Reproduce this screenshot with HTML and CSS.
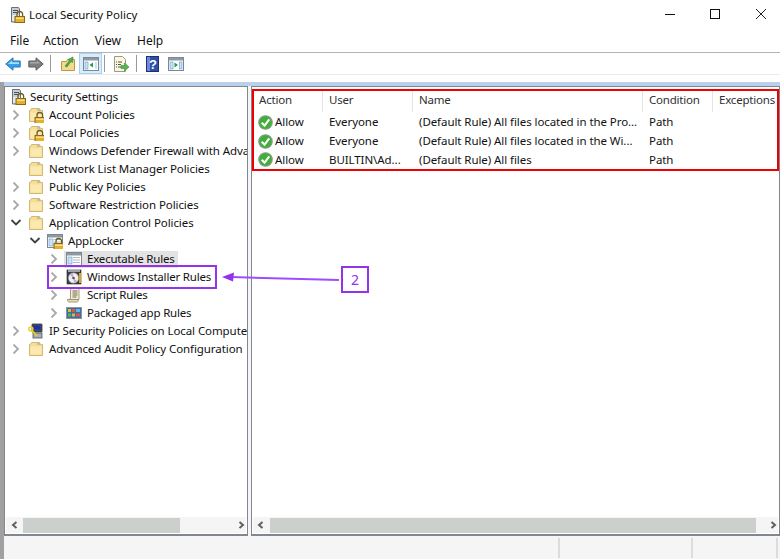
FILE: index.html
```html
<!DOCTYPE html>
<html lang="en">
<head>
<meta charset="utf-8">
<title>Local Security Policy</title>
<link rel="stylesheet" href="styles.css">
</head>
<body>
<svg class="defs" width="0" height="0" aria-hidden="true">
  <defs>
    <symbol id="lock" viewBox="0 0 16 16">
      <path d="M8 9.500V7.300a2.800 2.800 0 0 1 5.600 0v2.200" fill="none" stroke="#6e5a20" stroke-width="1.300"/>
      <rect x="6" y="9.500" width="9.500" height="6" fill="#e5b02c" stroke="#8a6a18"/>
      <rect x="7" y="10.500" width="7.500" height="1.500" fill="#f8e08a"/>
    </symbol>
    <symbol id="server" viewBox="0 0 16 16">
      <path d="M2.500.5h7l1 1.500v13h-8z" fill="#c9ced3" stroke="#66707a"/>
      <rect x="4" y="3" width="5" height="1" fill="#44505c"/>
      <rect x="4" y="5" width="5" height="1" fill="#44505c"/>
      <rect x="3" y="8" width="7" height="6" fill="#e8ebee"/>
      <use href="#lock"/>
    </symbol>
    <symbol id="folder" viewBox="0 0 16 16">
      <path d="M1.500 3.500h1l1-2h8l1 2h2v11h-13z" fill="#f8dd92" stroke="#d2b873"/>
      <path d="M2.500 5.500h11v8h-11z" fill="#fbe9b0"/>
      <rect x="9" y="2.500" width="3" height="1" fill="#7fa8d8"/>
    </symbol>
    <symbol id="folderlock" viewBox="0 0 16 16">
      <use href="#folder"/>
      <use href="#lock" x="1" y="1"/>
    </symbol>
    <symbol id="window" viewBox="0 0 16 16">
      <rect x="0.500" y="1.500" width="15" height="13" fill="#fff" stroke="#7d8890"/>
      <rect x="1" y="2" width="14" height="2.500" fill="#8d99a3"/>
      <rect x="2" y="6" width="4" height="7" fill="#cfe3f6" stroke="#6a9cc8" stroke-width=".6"/>
      <rect x="7" y="6" width="7" height="1" fill="#b5bcc2"/>
      <rect x="7" y="8.500" width="7" height="1" fill="#b5bcc2"/>
      <rect x="7" y="11" width="7" height="1" fill="#b5bcc2"/>
    </symbol>
    <symbol id="windowlock" viewBox="0 0 16 16">
      <use href="#window"/>
      <use href="#lock" x="1" y="1"/>
    </symbol>
    <symbol id="disc" viewBox="0 0 16 16">
      <rect x="1" y="1" width="14" height="14" fill="#3a3f46" stroke="#22262b" stroke-width=".6"/>
      <rect x="2" y="1" width="12" height="2" fill="#9aa4ad"/>
      <rect x="13" y="4" width="2" height="10" fill="#e0a020"/>
      <circle cx="7.500" cy="9" r="5.200" fill="#eef0f0" stroke="#8a9096" stroke-width=".5"/>
      <path d="M7.500 9 4 6a5 5 0 0 1 3-2zM7.500 9l3.500 3a5 5 0 0 1-3 2z" fill="#c7a6d8"/>
      <circle cx="7.500" cy="9" r="1.300" fill="#50565c"/>
    </symbol>
    <symbol id="scroll" viewBox="0 0 16 16">
      <path d="M5.500 1h9l-1.500 1.500v10H3.500l1-1.500V3z" fill="#f6eecb" stroke="#8c8468" stroke-width=".8"/>
      <path d="M1.500 12.500h10.500c.5 1 .2 2-.5 2.500H3c-1 0-1.700-1.500-1.500-2.500z" fill="#e9dfb2" stroke="#8c8468" stroke-width=".8"/>
      <path d="M6.500 4h5M6.500 6h5M6.500 8h5M6.500 10h4" stroke="#55575a" stroke-width=".9"/>
    </symbol>
    <symbol id="packaged" viewBox="0 0 16 16">
      <rect x="0.500" y="2.500" width="15" height="11" fill="#3a6fa5" stroke="#8b949c"/>
      <rect x="2" y="4" width="3" height="3" fill="#e8b52f"/>
      <rect x="6" y="4" width="3" height="3" fill="#e05a3a"/>
      <rect x="10" y="4" width="4" height="3" fill="#5cb8e8"/>
      <rect x="2" y="8.500" width="3" height="3" fill="#62b04a"/>
      <rect x="6" y="8.500" width="3" height="3" fill="#e8b52f"/>
      <rect x="10" y="8.500" width="4" height="3" fill="#d9534f"/>
    </symbol>
    <symbol id="ipsec" viewBox="0 0 16 16">
      <rect x="4" y="1" width="10" height="8" rx=".5" fill="#444c58" stroke="#30353c" stroke-width=".8"/>
      <rect x="5.500" y="2.500" width="7" height="4" fill="#1a2fb8"/>
      <rect x="5" y="10" width="9" height="5" fill="#a8aeb4" stroke="#50565c" stroke-width=".8"/>
      <circle cx="2.800" cy="6" r="2" fill="none" stroke="#f0d020" stroke-width="1.500"/>
      <path d="M4 7.500l5 5.500" stroke="#f0d020" stroke-width="1.600"/>
    </symbol>
    <symbol id="check" viewBox="0 0 16 16">
      <circle cx="8" cy="8" r="7.200" fill="#3fae3a" stroke="#8a9a8c" stroke-width="1.200"/>
      <path d="M4 8.200l3 3.200 5-6.800" fill="none" stroke="#fff" stroke-width="2.200"/>
    </symbol>
    <symbol id="chev" viewBox="0 0 8 10">
      <path d="M1.500 .5 6 5 1.500 9.500" fill="none" stroke="currentColor" stroke-width="1.800"/>
    </symbol>
    <symbol id="chevdown" viewBox="0 0 10 8">
      <path d="M.5 1 5 5.500 9.500 1" fill="none" stroke="currentColor" stroke-width="1.800"/>
    </symbol>
    <symbol id="sbleft" viewBox="0 0 8 8">
      <path d="M5.500 1 2 4l3.500 3" fill="none" stroke="#606060" stroke-width="2"/>
    </symbol>
    <symbol id="sbright" viewBox="0 0 8 8">
      <path d="M2.500 1 6 4 2.500 7" fill="none" stroke="#606060" stroke-width="2"/>
    </symbol>
  </defs>
</svg>

<div class="app">
  <header class="titlebar">
    <svg class="icon16"><use href="#server"/></svg>
    <span class="title">Local Security Policy</span>
    <div class="caption">
      <svg class="cap-btn" viewBox="0 0 10 10"><path d="M0 5.500h10" stroke="#111" fill="none"/></svg>
      <svg class="cap-btn cap-max" viewBox="0 0 10 10"><rect x=".5" y=".5" width="9" height="9" stroke="#111" fill="none"/></svg>
      <svg class="cap-btn" viewBox="0 0 10 10"><path d="M0 0l10 10M10 0 0 10" stroke="#222" fill="none"/></svg>
    </div>
  </header>

  <nav class="menubar">
    <span class="menu-file">File</span>
    <span class="menu-action">Action</span>
    <span class="menu-view">View</span>
    <span>Help</span>
  </nav>

  <div class="toolbar">
    <span class="tool tool-arrow"><svg class="icon16" viewBox="0 0 16 14"><path d="M.8 7 8 .8V4h7.200v6H8v3.200z" fill="#35a0ea" stroke="#2a74b8"/><path d="M3 7 7 3.500V5.300h7V7z" fill="#a8dcf8"/></svg></span>
    <span class="tool tool-arrow"><svg class="icon16" viewBox="0 0 16 14"><path d="M15.200 7 8 .8V4H.8v6H8v3.200z" fill="#7d7f80" stroke="#5e6062"/><path d="M2 5h7V3.500L12 6.500H2z" fill="#a8aaab"/></svg></span>
    <span class="tool-sep"></span>
    <span class="tool tool-up"><svg class="icon16" viewBox="0 0 16 16"><path d="M1.500 5.500h5l1-2h7v11h-13z" fill="#f5d98c" stroke="#b8984e"/><path d="M5 10 9.500 4.500 8 3.500l5-2.500-.5 5.500-1.500-1L7 11z" fill="#4db04a" stroke="#2f8430" stroke-width=".6"/></svg></span>
    <span class="tool tool-active"><svg class="icon16" viewBox="0 0 16 16"><rect x=".5" y="1.500" width="15" height="13" fill="#fff" stroke="#7d8890"/><rect x="1" y="2" width="14" height="2.500" fill="#8d99a3"/><rect x="2" y="6" width="3" height="7" fill="#cfe3f6" stroke="#5a9ad0" stroke-width=".6"/><path d="M10 6.500v5L6.500 9z" fill="#2f9a3f"/><rect x="12" y="6" width="2" height="7" fill="#cfe3f6"/></svg></span>
    <span class="tool-sep"></span>
    <span class="tool tool-export"><svg class="icon16" viewBox="0 0 16 16"><path d="M1.500.5h8l3 3v12h-11z" fill="#fbf7df" stroke="#9a9a88"/><path d="M3 6h1M5 6h4M3 8.500h1M5 8.500h3M3 11h1M5 11h3" stroke="#555"/><path d="M8 9.500h3.500V7l4.500 4-4.500 4v-2.500H8z" fill="#52b84e" stroke="#3a8f3a" stroke-width=".6"/></svg></span>
    <span class="tool-sep"></span>
    <span class="tool tool-help"><svg class="icon-help" viewBox="0 0 13 16" role="img" aria-label="Help"><rect x=".5" y=".5" width="12" height="15" fill="#2e50a8" stroke="#1c3272"/><rect x="1" y="1" width="3" height="14" fill="#6f8ad0"/><text x="6.800" y="12.500" class="help-q">?</text></svg></span>
    <span class="tool tool-last"><svg class="icon16" viewBox="0 0 16 16"><rect x=".5" y="1.500" width="15" height="13" fill="#fff" stroke="#7d8890"/><rect x="1" y="2" width="14" height="2.500" fill="#8d99a3"/><rect x="2" y="6" width="3" height="7" fill="#cfe3f6" stroke="#5a9ad0" stroke-width=".6"/><path d="M6.500 6.500v5L10 9z" fill="#2f9a3f"/><rect x="11.500" y="6" width="2.500" height="7" fill="#cfe3f6" stroke="#5a9ad0" stroke-width=".6"/></svg></span>
  </div>

  <div class="workspace">
    <div class="band"></div>
    <main class="panes">
      <section class="pane pane-tree">
        <div class="pane-body tree">
          <div class="row lv0"><span class="node"><svg class="icon16"><use href="#server"/></svg><span>Security Settings</span></span></div>
          <div class="row lv1"><svg class="tw"><use href="#chev"/></svg><span class="node"><svg class="icon16"><use href="#folderlock"/></svg><span>Account Policies</span></span></div>
          <div class="row lv1"><svg class="tw"><use href="#chev"/></svg><span class="node"><svg class="icon16"><use href="#folderlock"/></svg><span>Local Policies</span></span></div>
          <div class="row lv1"><svg class="tw"><use href="#chev"/></svg><span class="node"><svg class="icon16"><use href="#folder"/></svg><span>Windows Defender Firewall with Advanced Security</span></span></div>
          <div class="row lv1"><span class="tw"></span><span class="node"><svg class="icon16"><use href="#folder"/></svg><span>Network List Manager Policies</span></span></div>
          <div class="row lv1"><svg class="tw"><use href="#chev"/></svg><span class="node"><svg class="icon16"><use href="#folder"/></svg><span>Public Key Policies</span></span></div>
          <div class="row lv1"><svg class="tw"><use href="#chev"/></svg><span class="node"><svg class="icon16"><use href="#folder"/></svg><span>Software Restriction Policies</span></span></div>
          <div class="row lv1"><svg class="tw tw-open"><use href="#chevdown"/></svg><span class="node"><svg class="icon16"><use href="#folder"/></svg><span>Application Control Policies</span></span></div>
          <div class="row lv2"><svg class="tw tw-open"><use href="#chevdown"/></svg><span class="node"><svg class="icon16"><use href="#windowlock"/></svg><span>AppLocker</span></span></div>
          <div class="row lv3"><svg class="tw"><use href="#chev"/></svg><span class="node selected"><svg class="icon16"><use href="#window"/></svg><span>Executable Rules</span></span></div>
          <div class="row lv3"><svg class="tw"><use href="#chev"/></svg><span class="node"><svg class="icon16"><use href="#disc"/></svg><span>Windows Installer Rules</span></span></div>
          <div class="row lv3"><svg class="tw"><use href="#chev"/></svg><span class="node"><svg class="icon16"><use href="#scroll"/></svg><span>Script Rules</span></span></div>
          <div class="row lv3"><svg class="tw"><use href="#chev"/></svg><span class="node"><svg class="icon16"><use href="#packaged"/></svg><span>Packaged app Rules</span></span></div>
          <div class="row lv1"><svg class="tw"><use href="#chev"/></svg><span class="node"><svg class="icon16"><use href="#ipsec"/></svg><span>IP Security Policies on Local Computer</span></span></div>
          <div class="row lv1"><svg class="tw"><use href="#chev"/></svg><span class="node"><svg class="icon16"><use href="#folder"/></svg><span>Advanced Audit Policy Configuration</span></span></div>
        </div>
        <div class="hscroll hscroll-tree">
          <svg class="sb-arrow"><use href="#sbleft"/></svg>
          <span class="thumb"></span>
          <svg class="sb-arrow"><use href="#sbright"/></svg>
        </div>
      </section>

      <section class="pane pane-list">
        <div class="pane-body">
          <div class="list-head">
            <span>Action</span><span>User</span><span>Name</span><span>Condition</span><span>Exceptions</span>
          </div>
          <div class="list-row">
            <span class="action"><svg class="icon16 icon-check"><use href="#check"/></svg>Allow</span><span>Everyone</span><span>(Default Rule) All files located in the Pro...</span><span>Path</span><span></span>
          </div>
          <div class="list-row">
            <span class="action"><svg class="icon16 icon-check"><use href="#check"/></svg>Allow</span><span>Everyone</span><span>(Default Rule) All files located in the Wi...</span><span>Path</span><span></span>
          </div>
          <div class="list-row">
            <span class="action"><svg class="icon16 icon-check"><use href="#check"/></svg>Allow</span><span>BUILTIN\Ad...</span><span>(Default Rule) All files</span><span>Path</span><span></span>
          </div>
        </div>
        <div class="hscroll hscroll-list">
          <svg class="sb-arrow"><use href="#sbleft"/></svg>
          <span class="thumb"></span>
          <svg class="sb-arrow"><use href="#sbright"/></svg>
        </div>
      </section>
    </main>
    <footer class="statusbar">
      <span class="st st-main"></span>
      <span class="st st-mid"></span>
      <span class="st st-end"></span>
    </footer>
  </div>

  <div class="mark mark-red"></div>
  <div class="mark mark-purple"></div>
  <svg class="mark-arrow" viewBox="0 0 125 12" aria-hidden="true">
    <path d="M118 8 10 5" stroke="#9b4dff" stroke-width="2" fill="none"/>
    <path d="M1 5 13 0.500 12 9.500z" fill="#9333ea"/>
  </svg>
  <div class="mark-label">2</div>
</div>
</body>
</html>
```

FILE: styles.css
```css
* { box-sizing: border-box; }
html, body { margin: 0; padding: 0; }
body {
  width: 780px;
  height: 559px;
  overflow: hidden;
  background: #fff;
  color: #111;
  font: 11.5px/16px "Noto Sans", "Open Sans", sans-serif;
  letter-spacing: -0.2px;
}
.defs { position: absolute; }
.app { position: relative; display: flex; flex-direction: column; width: 780px; height: 559px; }
.icon16 { width: 16px; height: 16px; flex: none; display: block; }

.titlebar { display: flex; align-items: center; height: 30px; padding-left: 9px; flex: none; }
.title { margin-left: 4px; letter-spacing: 0; }
.caption { display: flex; margin-left: auto; gap: 35px; padding-right: 14px; }
.cap-btn { width: 10px; height: 10px; display: block; margin-top: -2px; }
.cap-max { margin-right: 1px; }

.menubar { display: flex; align-items: center; height: 23px; padding: 0 0 1px 10px; border-bottom: 1px solid #b4b4b4; flex: none; font-size: 12px; letter-spacing: 0; }
.menu-file { margin-right: 14px; }
.menu-action { margin-right: 16px; }
.menu-view { margin-right: 16px; }

.toolbar { display: flex; align-items: center; height: 22px; padding-left: 5px; flex: none; border-bottom: 1px solid #ebebeb; }
.tool { display: flex; align-items: center; justify-content: center; }
.tool-arrow { width: 16px; margin-right: 7px; }
.tool-sep { width: 1px; height: 17px; background: #9a9a9a; flex: none; }
.toolbar .tool-arrow + .tool-sep { margin-left: -1px; }
.tool-up { margin-left: 9px; width: 16px; }
.tool-active { width: 23px; height: 21px; margin: 0 2px 0 3px; background: #d8ecfb; border: 1px solid #a3d2f5; }
.tool-export { margin: 0 7px 0 8px; width: 16px; }
.tool-help { margin: 0 9px; width: 13px; }
.tool-last { width: 16px; }
.icon-help { width: 13px; height: 16px; display: block; }
.help-q { font: bold 13px "Liberation Sans", sans-serif; fill: #fff; text-anchor: middle; }

.workspace { flex: 1; min-height: 0; margin-top: 7px; border-left: 4px solid #a0a0a0; background: #f5f5f5; display: flex; flex-direction: column; }
.band { height: 4px; background: #b9d1ea; flex: none; }
.panes { display: flex; gap: 3px; height: 450px; flex: none; }
.pane { display: flex; flex-direction: column; background: #fff; border: 1px solid #82878f; border-bottom-width: 2px; min-width: 0; }
.pane-tree { width: 244px; flex: none; }
.pane-list { flex: 1; }
.pane-body { flex: 1; min-height: 0; overflow: hidden; }

.tree { padding-top: 1px; }
.row { display: flex; align-items: center; height: 18px; white-space: nowrap; }
.lv0 { padding-left: 3px; letter-spacing: -0.1px; }
.lv1 { padding-left: 3px; letter-spacing: -0.08px; }
.lv2 { padding-left: 22px; }
.lv3 { padding-left: 41px; }
.tw { width: 16px; height: 10px; margin-right: 2px; flex: none; color: #a8a8a8; display: block; }
.tw-open { height: 8px; color: #404040; }
.node { display: flex; align-items: center; height: 17px; gap: 5px; padding: 0 2px; }
.lv0 .node { gap: 4px; }
.selected { background: #e3e3e3; padding-right: 3px; }

.list-head, .list-row { display: grid; grid-template-columns: 71px 90px 230px 70px 1fr; white-space: nowrap; letter-spacing: -0.07px; }
.list-head { height: 25px; padding-top: 2px; color: #303030; letter-spacing: -0.2px; }
.list-head span { padding: 2px 0 0 6px; border-right: 1px solid #e5e5e5; height: 22px; }
.list-head span:first-child { padding-left: 7px; }
.list-head span:last-child { border-right: 0; }
.list-row { height: 18.75px; align-items: center; }
.list-row span { padding-left: 6px; overflow: hidden; }
.list-row .action { display: flex; align-items: center; gap: 2px; padding-left: 6px; }
.list-row .icon-check { width: 15px; height: 15px; }
.pane-list .pane-body { padding-top: 1px; }

.hscroll { display: flex; align-items: center; height: 16px; margin: 0 1px 1px; background: #f5f5f5; flex: none; }
.sb-arrow { width: 8px; height: 8px; flex: none; display: block; }
.thumb { height: 15px; background: #ccd0cc; display: block; }
.hscroll-tree { padding: 0 1px 0 5px; }
.hscroll-tree .thumb { width: 157px; margin: 0 auto 0 4px; }
.hscroll-list { padding: 0 1px 0 4px; }
.hscroll-list .thumb { width: 486px; margin: 0 auto 0 5px; }

.statusbar { flex: 1; display: flex; padding-top: 2px; padding-bottom: 1px; }
.st { border-right: 2px solid #dcdcdc; }
.st-main { width: 556px; }
.st-mid { width: 133px; }
.st-end { width: 85px; }

.mark { position: absolute; }
.mark-red { left: 252px; top: 89px; width: 527px; height: 82px; border: 2px solid #ee0000; }
.mark-purple { left: 47px; top: 265px; width: 170px; height: 24px; border: 2px solid #9333ea; }
.mark-arrow { position: absolute; left: 221px; top: 272px; width: 125px; height: 12px; }
.mark-label { position: absolute; left: 341px; top: 266px; width: 28px; height: 27px; border: 2px solid #9333ea; background: #fff; color: #9333ea; font-size: 14px; line-height: 23px; text-align: center; letter-spacing: 0; }
```
